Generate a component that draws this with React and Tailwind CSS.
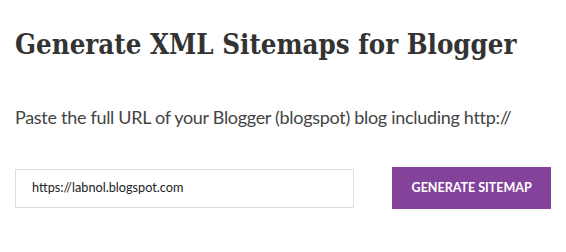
export default function App() {
  return (
    <div className="w-[566px] h-[252px] bg-white px-[15px] pt-[26px] font-['Lato',sans-serif]">
      <h1 className="whitespace-nowrap text-[27.4px] leading-[36px] font-bold text-[#333333] font-['DejaVu_Serif',serif] font-stretch-condensed">
        Generate XML Sitemaps for Blogger
      </h1>
      <p className="whitespace-nowrap mt-[41px] text-[18px] leading-[28px] tracking-[-0.3px] text-[#444444]">
        Paste the full URL of your Blogger (blogspot) blog including http://
      </p>
      <div className="mt-[36px] flex items-center gap-[38px]">
        <div className="w-[342px] h-[39px] border border-[#dddddd] flex items-center pl-[16px] text-[12.7px] text-[#222222]">
          https://labnol.blogspot.com
        </div>
        <button className="w-[160px] h-[42px] bg-[#83439b] text-white text-[12.5px] font-bold uppercase">
          Generate Sitemap
        </button>
      </div>
    </div>
  );
}
